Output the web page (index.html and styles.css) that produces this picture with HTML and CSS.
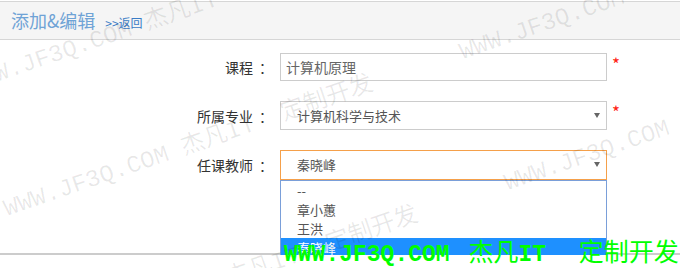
FILE: index.html
```html
<!DOCTYPE html>
<html lang="zh-CN">
<head>
  <meta charset="UTF-8" />
  <title>添加&amp;编辑</title>
  <link rel="stylesheet" href="styles.css">
</head>
<body>
  <div class="page-head">
    <h2>添加&amp;编辑</h2>
    <a href="#" class="back">&gt;&gt;返回</a>
  </div>

  <div class="form">
    <div class="row">
      <label>课程<span class="colon">：</span></label>
      <input type="text" class="text" value="计算机原理" />
      <span class="req">*</span>
    </div>
    <div class="row">
      <label>所属专业<span class="colon">：</span></label>
      <div class="field">
        <div class="select">计算机科学与技术</div>
      </div>
      <span class="req">*</span>
    </div>
    <div class="row">
      <label>任课教师<span class="colon">：</span></label>
      <div class="field">
        <div class="select open">秦晓峰</div>
        <ul class="options">
          <li>--</li>
          <li>章小蕙</li>
          <li>王洪</li>
          <li class="active">秦晓峰</li>
        </ul>
      </div>
    </div>
  </div>

  <div class="watermark">
    <div class="wm-line l1"><span>WWW.JF3Q.COM 杰凡IT&nbsp; 定制开发</span><span>WWW.JF3Q.COM 杰凡IT&nbsp; 定制开发</span></div>
    <div class="wm-line l2"><span>WWW.JF3Q.COM 杰凡IT&nbsp; 定制开发</span><span>WWW.JF3Q.COM 杰凡IT&nbsp; 定制开发</span></div>
    <div class="wm-line l3"><span>WWW.JF3Q.COM 杰凡IT&nbsp; 定制开发</span><span>WWW.JF3Q.COM 杰凡IT&nbsp; 定制开发</span></div>
    <div class="stamp">WWW.JF3Q.COM <span>杰凡</span>IT  <span>定制开发</span></div>
  </div>
</body>
</html>
```

FILE: styles.css
```css
html, body {
  overflow: hidden;
}
body {
  margin: 0;
  background: #fff;
  color: #333;
  font-family: "Noto Sans CJK SC", sans-serif;
}
.page-head {
  margin-top: 1px;
  height: 37px;
  line-height: 37px;
  padding-left: 11px;
  background: #f5f5f5;
  border-top: 1px solid #d6d6d6;
  border-bottom: 1px solid #d6d6d6;
  display: flex;
  align-items: baseline;
}
.page-head h2 {
  margin: 0;
  font-size: 18px;
  font-weight: normal;
  color: #6fa3d6;
}
.back {
  margin-left: 10px;
  font-size: 12px;
  color: #3a7cc6;
  text-decoration: none;
}
.form {
  padding-top: 13px;
  height: 200px;
  border-bottom: 2px solid #cccccc;
}
.row {
  display: flex;
  align-items: center;
  margin-bottom: 20px;
}
.row label {
  width: 267px;
  text-align: right;
  font-size: 14px;
  color: #333;
}
.colon {
  padding-left: 6px;
  margin-right: -6px;
}
.text, .field {
  margin-left: 13px;
  width: 327px;
  box-sizing: border-box;
}
.text {
  height: 28px;
  padding: 0 5px;
  border: 1px solid #cccccc;
  font: 14px "Noto Sans CJK SC", sans-serif;
  color: #666;
  outline: none;
}
.field {
  position: relative;
}
.select {
  position: relative;
  height: 29px;
  line-height: 27px;
  padding-left: 16px;
  border: 1px solid #cccccc;
  box-sizing: border-box;
  font-size: 13px;
  color: #555;
}
.select::after {
  content: "";
  position: absolute;
  right: 6px;
  top: 11px;
  border-left: 3.5px solid transparent;
  border-right: 3.5px solid transparent;
  border-top: 5px solid #666;
}
.select.open {
  height: 30px;
  line-height: 28px;
  border-color: #f5a04a;
}
.req {
  align-self: flex-start;
  margin: 2px 0 0 5px;
  font-size: 17px;
  line-height: 17px;
  color: #f21;
}
.options {
  position: absolute;
  top: 100%;
  left: 0;
  right: 0;
  margin: 0;
  padding: 0;
  list-style: none;
  background: #fff;
  border: 1px solid #7a9fd9;
  font-size: 13px;
  color: #555;
}
.options li {
  height: 19px;
  line-height: 19px;
  padding-left: 16px;
}
.options li.active {
  background: #1e90ff;
  color: #fff;
}
.watermark {
  position: absolute;
  left: 0;
  top: 0;
  width: 680px;
  height: 268px;
  overflow: hidden;
  pointer-events: none;
}
.wm-line {
  position: absolute;
  white-space: nowrap;
  transform: rotate(-19deg);
  transform-origin: 0 0;
  font: 24px/24px "Liberation Mono", "Noto Sans CJK SC", monospace;
  color: rgba(0, 0, 0, 0.09);
}
.wm-line span {
  display: inline-block;
  margin-right: 93px;
}
.l1 { left: -36px; top: 74px; }
.l2 { left: 1px; top: 199px; }
.l3 { left: 46px; top: 330px; }
.stamp {
  position: absolute;
  left: 284px;
  top: 238px;
  white-space: pre;
  font: bold 23px/25px "Liberation Mono", monospace;
  color: #00ff00;
}
.stamp span {
  margin-left: 5px;
  font-family: "Noto Sans CJK SC", sans-serif;
  font-size: 25px;
  font-weight: normal;
}
```
